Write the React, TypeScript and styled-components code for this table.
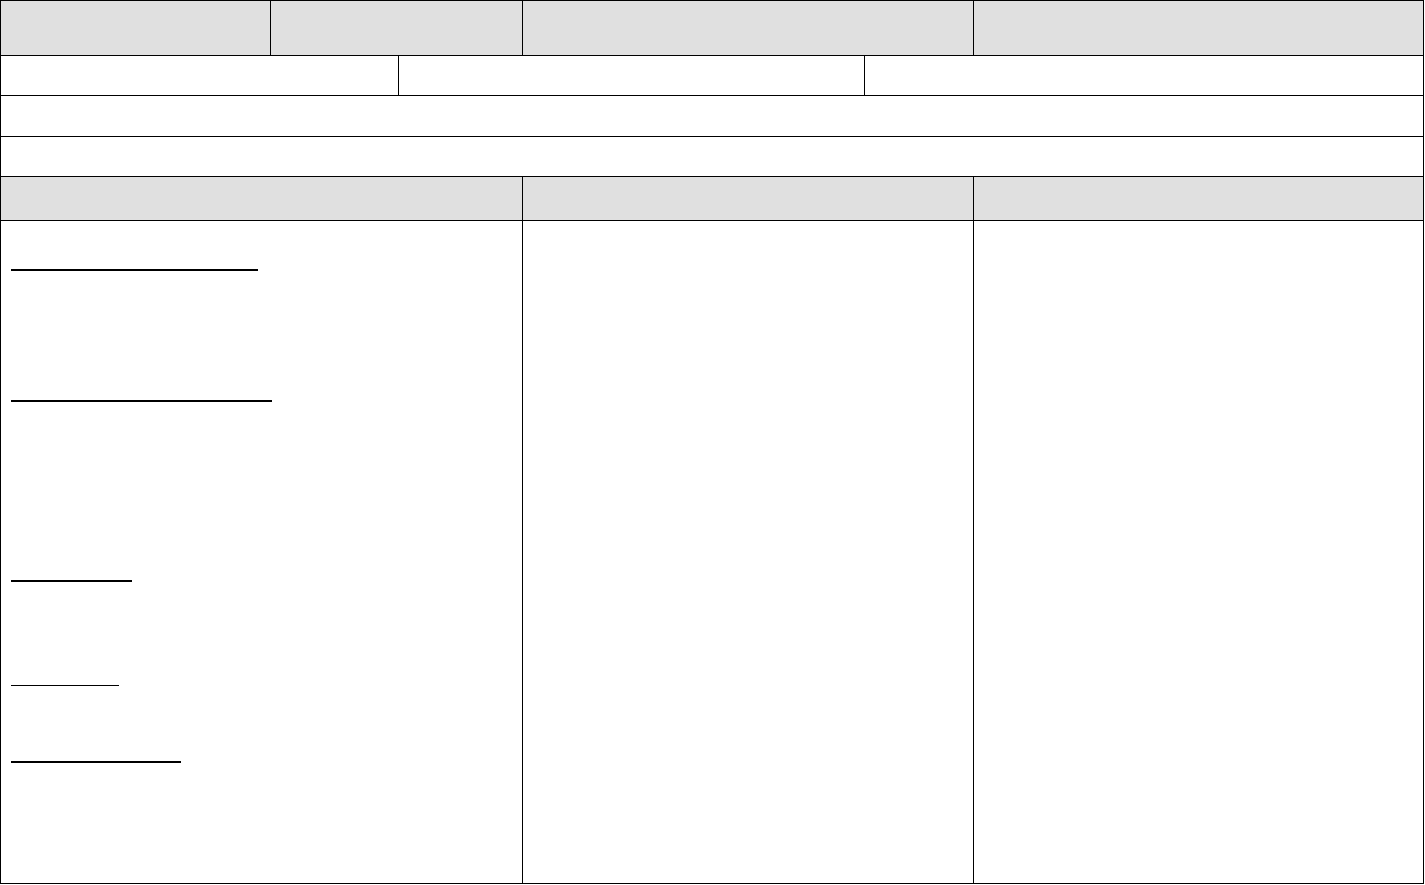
import { ReactElement } from 'react'
import styled, { createGlobalStyle } from 'styled-components'

const GlobalStyle = createGlobalStyle`
  html,
  body {
    margin: 0;
    padding: 0;
    background: #ffffff;
    font-family: 'Liberation Sans', Arial, sans-serif;
  }
`

interface IRowProps {
  $cols: string
  $height: number
}

interface ICellProps {
  $shaded?: boolean
}

interface IBlankProps {
  $width: number
  $gap: number
  $bold?: boolean
}

const Sheet = styled.div`
  display: flex;
  flex-direction: column;
  width: 1424px;
  box-sizing: border-box;
  border-left: 1px solid #000;
  border-top: 1px solid #000;
`

const Row = styled.div<IRowProps>`
  display: grid;
  grid-template-columns: ${p => p.$cols};
  height: ${p => p.$height}px;
`

const Cell = styled.div<ICellProps>`
  box-sizing: border-box;
  border-right: 1px solid #000;
  border-bottom: 1px solid #000;
  background: ${p => (p.$shaded ? '#e0e0e0' : '#ffffff')};
  font-size: 15px;
  color: #000;
`

const FieldList = styled(Cell)`
  display: flex;
  flex-direction: column;
  align-items: flex-start;
  padding-left: 10px;
`

// blank answer line, the thick ones are bold underlines in the source form
const Blank = styled.span<IBlankProps>`
  display: block;
  width: ${p => p.$width}px;
  height: 0;
  margin-top: ${p => p.$gap}px;
  border-bottom: ${p => (p.$bold ? 2 : 1)}px solid #000;
`

const blanks = [
  { width: 247, gap: 48, bold: true },
  { width: 261, gap: 129, bold: true },
  { width: 121, gap: 178, bold: true },
  { width: 108, gap: 103, bold: false },
  { width: 170, gap: 75, bold: true },
]

const App = (): ReactElement => {
  return (
    <>
      <GlobalStyle />
      <Sheet>
        <Row $cols="270px 252px 451px 450px" $height={55}>
          <Cell $shaded />
          <Cell $shaded />
          <Cell $shaded />
          <Cell $shaded />
        </Row>

        <Row $cols="398px 466px 559px" $height={40}>
          <Cell />
          <Cell />
          <Cell />
        </Row>

        <Row $cols="1423px" $height={41}>
          <Cell />
        </Row>

        <Row $cols="1423px" $height={40}>
          <Cell />
        </Row>

        <Row $cols="522px 451px 450px" $height={44}>
          <Cell $shaded />
          <Cell $shaded />
          <Cell $shaded />
        </Row>

        <Row $cols="522px 451px 450px" $height={663}>
          <FieldList>
            {blanks.map((blank, i) => (
              <Blank
                key={i}
                $width={blank.width}
                $gap={blank.gap}
                $bold={blank.bold}
              />
            ))}
          </FieldList>
          <Cell />
          <Cell />
        </Row>
      </Sheet>
    </>
  )
}

export default App
